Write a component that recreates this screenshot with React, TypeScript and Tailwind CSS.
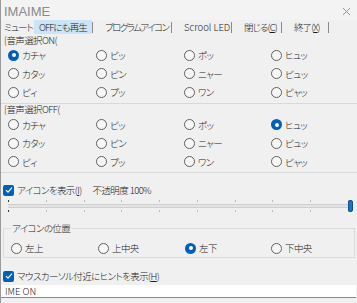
import React from "react";

const jp = "font-['Yu_Gothic_UI','Noto_Sans_CJK_JP',sans-serif] [font-feature-settings:'palt'] font-light tracking-[-0.6px]";

function Radio({ checked }: { checked?: boolean }) {
  return checked ? (
    <span className="w-[11px] h-[11px] rounded-full bg-[#005fb8] flex items-center justify-center shrink-0">
      <span className="w-[4px] h-[4px] rounded-full bg-white" />
    </span>
  ) : (
    <span className="w-[11px] h-[11px] rounded-full border border-[#606060] bg-[#f7f7f7] shrink-0" />
  );
}

function Check() {
  return (
    <span className="w-[11px] h-[11px] rounded-[2px] bg-[#005fb8] flex items-center justify-center shrink-0">
      <svg width="8" height="8" viewBox="0 0 8 8" fill="none" stroke="white" strokeWidth={1.2}>
        <path d="M1 4.2l2 2 4-4.5" />
      </svg>
    </span>
  );
}

function Sep() {
  return <span className="w-px h-[11px] bg-[#8a8a8a] shrink-0" />;
}

function RadioCell({ label, checked }: { label: string; checked?: boolean }) {
  return (
    <div className="flex items-center gap-[3px]">
      <Radio checked={checked} />
      <span className="whitespace-nowrap">{label}</span>
    </div>
  );
}

const sounds = [
  ["カチャ", "ピッ", "ポッ", "ヒュッ"],
  ["カタッ", "ピン", "ニャー", "ピュッ"],
  ["ピィ", "プッ", "ワン", "ピャッ"],
];

function SoundGroup({ title, selected }: { title: string; selected: string }) {
  return (
    <div>
      <div className="h-[12px] pl-[3px] flex items-center">{title}</div>
      {sounds.map((row, i) => (
        <div key={i} className="h-[18.5px] grid grid-cols-[88px_88px_87px_1fr] pl-[7px] items-center">
          {row.map((s) => (
            <RadioCell key={s} label={s} checked={s === selected} />
          ))}
        </div>
      ))}
    </div>
  );
}

export default function App() {
  const ticks = Array.from({ length: 10 });
  return (
    <div className={`w-[357px] h-[303px] bg-[#f0f0f0] text-[9.5px] text-[#1a1a1a] overflow-hidden flex flex-col border-l border-[#9a9a9a] ${jp}`}>
      {/* タイトル */}
      <div className="h-[20px] flex items-center justify-between pl-[3px] pr-[6px] pt-[3px] bg-[#f3f3f3]">
        <span className="text-[13px] text-[#8a8a8a] font-normal tracking-normal font-['Liberation_Sans',sans-serif]">IMAIME</span>
        <svg width="9" height="9" viewBox="0 0 9 9" stroke="#8a8a8a" strokeWidth={0.9}>
          <path d="M1 1l7 7M8 1l-7 7" />
        </svg>
      </div>

      {/* メニュー */}
      <div className="h-[14px] flex items-center whitespace-nowrap tracking-[-0.9px]">
        <span className="ml-[3px] w-[30px]">ミュート</span>
        <span className="w-[58px] h-[14px] bg-[#cce4f7] flex items-center justify-center">OFFにも再生</span>
        <Sep />
        <span className="w-[78px] pl-[12px] tracking-[-1.6px]">プログラムアイコン</span>
        <Sep />
        <span className="w-[59px] pl-[12px] tracking-normal">Scrool LED</span>
        <Sep />
        <span className="w-[49px] pl-[12px]">閉じる(<u>C</u>)</span>
        <Sep />
        <span className="w-[46px] pl-[12px]">終了(<u>X</u>)</span>
        <Sep />
      </div>

      <SoundGroup title="[音声選択ON(" selected="カチャ" />
      <div className="h-px bg-[#d9d9d9] mt-px" />
      <SoundGroup title="[音声選択OFF(" selected="ヒュッ" />
      <div className="h-px bg-[#d9d9d9] mt-px" />

      {/* アイコン表示 */}
      <div className="mt-[9px] h-[16px] flex items-center pl-[2px] gap-[3px]">
        <Check />
        <span>アイコンを表示(<u>I</u>)</span>
        <span className="ml-[8px]">不透明度 100%</span>
      </div>

      {/* スライダー */}
      <div className="h-[16px] relative pl-[7px] pr-[5px] flex flex-col justify-center">
        <div className="flex justify-between h-[3px] pr-[3px]">
          {ticks.map((_, i) => (
            <span key={i} className={`w-px h-[2px] ${i === 0 ? "bg-[#333]" : "bg-[#bdbdbd]"}`} />
          ))}
        </div>
        <div className="h-[4px] my-[1px] bg-[#e3e3e3] border-y border-[#d0d0d0]" />
        <div className="flex justify-between h-[3px] pr-[3px] items-end">
          {ticks.map((_, i) => (
            <span key={i} className={`w-px h-[2px] ${i === 0 ? "bg-[#333]" : "bg-[#bdbdbd]"}`} />
          ))}
        </div>
        <span className="absolute right-[4px] top-[2px] w-[5px] h-[12px] rounded-[2px] bg-[#1a73c8] border border-[#0d4f91]" />
      </div>

      {/* アイコンの位置 */}
      <div className="mt-[14px] mx-[2px] h-[30px] border border-t-0 border-[#dcdcdc] flex flex-col">
        <div className="flex items-center h-px overflow-visible">
          <span className="w-[7px] h-px bg-[#dcdcdc]" />
          <span className="px-[1px] leading-none">アイコンの位置</span>
          <span className="flex-1 h-px bg-[#dcdcdc]" />
        </div>
        <div className="mt-[11px] h-[16px] grid grid-cols-[87px_87px_86px_1fr] pl-[7px] items-center">
          <RadioCell label="左上" />
          <RadioCell label="上中央" />
          <RadioCell label="左下" checked />
          <RadioCell label="下中央" />
        </div>
      </div>

      {/* ヒント */}
      <div className="mt-[10px] h-[16px] flex items-center pl-[2px] gap-[3px]">
        <Check />
        <span>マウスカーソル付近にヒントを表示(<u>H</u>)</span>
      </div>

      <div className="mt-px mr-[1px] h-[13px] bg-white border-b border-[#8a8a8a] flex items-center pl-[4px] tracking-normal">
        IME ON
      </div>
    </div>
  );
}
